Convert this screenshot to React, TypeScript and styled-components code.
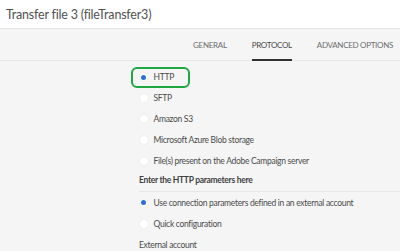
import React from "react";
import styled, { createGlobalStyle } from "styled-components";

const GlobalStyle = createGlobalStyle`
  html, body {
    margin: 0;
    padding: 0;
    background: #f5f5f5;
  }
  body {
    font-family: Lato, "Open Sans", sans-serif;
    color: #4b4b4b;
  }
`;

const protocols = [
  { label: "HTTP", checked: true, highlight: true },
  { label: "SFTP" },
  { label: "Amazon S3" },
  { label: "Microsoft Azure Blob storage" },
  { label: "File(s) present on the Adobe Campaign server" },
];

const params = [
  { label: "Use connection parameters defined in an external account", checked: true },
  { label: "Quick configuration" },
];

const tabs = ["GENERAL", "PROTOCOL", "ADVANCED OPTIONS"];

const Radio: React.FC<{ label: string; checked?: boolean; highlight?: boolean }> = ({
  label,
  checked,
  highlight,
}) => (
  <Option>
    <OptionInner highlight={!!highlight}>
      <Circle>{checked && <Dot />}</Circle>
      <OptionLabel>{label}</OptionLabel>
    </OptionInner>
  </Option>
);

const App: React.FC = () => {
  return (
    <>
      <GlobalStyle />
      <Page>
        <Header>
          <Title>Transfer file 3 (fileTransfer3)</Title>
        </Header>
        <TabBar>
          {tabs.map((t) => (
            <Tab key={t} active={t === "PROTOCOL"}>
              {t}
            </Tab>
          ))}
        </TabBar>
        <Body>
          <Group>
            {protocols.map((p) => (
              <Radio key={p.label} {...p} />
            ))}
          </Group>
          <Section>Enter the HTTP parameters here</Section>
          <Group>
            {params.map((p) => (
              <Radio key={p.label} {...p} />
            ))}
          </Group>
          <FieldLabel>External account</FieldLabel>
        </Body>
      </Page>
    </>
  );
};

const Page = styled.div`
  width: 400px;
  height: 251px;
  overflow: hidden;
  background: #f5f5f5;
`;

const Header = styled.div`
  height: 28px;
  background: #fff;
  border-bottom: 1px solid #e4e4e4;
  display: flex;
  align-items: center;
  padding-left: 6px;
`;

const Title = styled.div`
  font-size: 12.5px;
  color: #505050;
  letter-spacing: -0.2px;
  margin-top: 1px;
`;

const TabBar = styled.div`
  height: 31px;
  border-bottom: 1px solid #e8e8e8;
  display: flex;
  justify-content: flex-end;
  gap: 25px;
  padding-right: 7px;
`;

const Tab = styled.div<{ active: boolean }>`
  font-size: 8px;
  color: ${(p) => (p.active ? "#4b4b4b" : "#6e6e6e")};
  display: flex;
  align-items: center;
  padding-top: 1px;
  border-bottom: 2px solid ${(p) => (p.active ? "#323232" : "transparent")};
  margin-bottom: -1px;
  letter-spacing: -0.3px;
`;

const Body = styled.div`
  padding: 5.5px 0 0 139px;
`;

const Group = styled.div`
  display: flex;
  flex-direction: column;
`;

const Option = styled.div`
  height: 21px;
  display: flex;
  align-items: center;
`;

const OptionInner = styled.div<{ highlight: boolean }>`
  display: flex;
  align-items: center;
  gap: 5px;
  margin-left: -8px;
  padding: 0 14px 0 5.5px;
  height: 17px;
  border-radius: 6px;
  border: 2.5px solid ${(p) => (p.highlight ? "#1ea743" : "transparent")};
`;

const Circle = styled.span`
  width: 10px;
  height: 10px;
  border-radius: 50%;
  background: #fff;
  border: 1px solid #eeeeee;
  box-sizing: border-box;
  display: flex;
  align-items: center;
  justify-content: center;
  flex-shrink: 0;
`;

const Dot = styled.span`
  width: 5px;
  height: 5px;
  border-radius: 50%;
  background: #2d6fd3;
`;

const OptionLabel = styled.span`
  font-size: 8.5px;
  line-height: 12px;
  letter-spacing: -0.3px;
  color: #4b4b4b;
  white-space: nowrap;
`;

const Section = styled.div`
  font-size: 8.5px;
  line-height: 12px;
  font-weight: 700;
  color: #3f3f3f;
  letter-spacing: -0.3px;
  padding: 2.5px 0 5px;
  border-bottom: 1px solid #e6e6e6;
`;

const FieldLabel = styled.div`
  font-size: 8.5px;
  line-height: 12px;
  letter-spacing: -0.3px;
  color: #4b4b4b;
  padding-top: 4.5px;
`;

export default App;
